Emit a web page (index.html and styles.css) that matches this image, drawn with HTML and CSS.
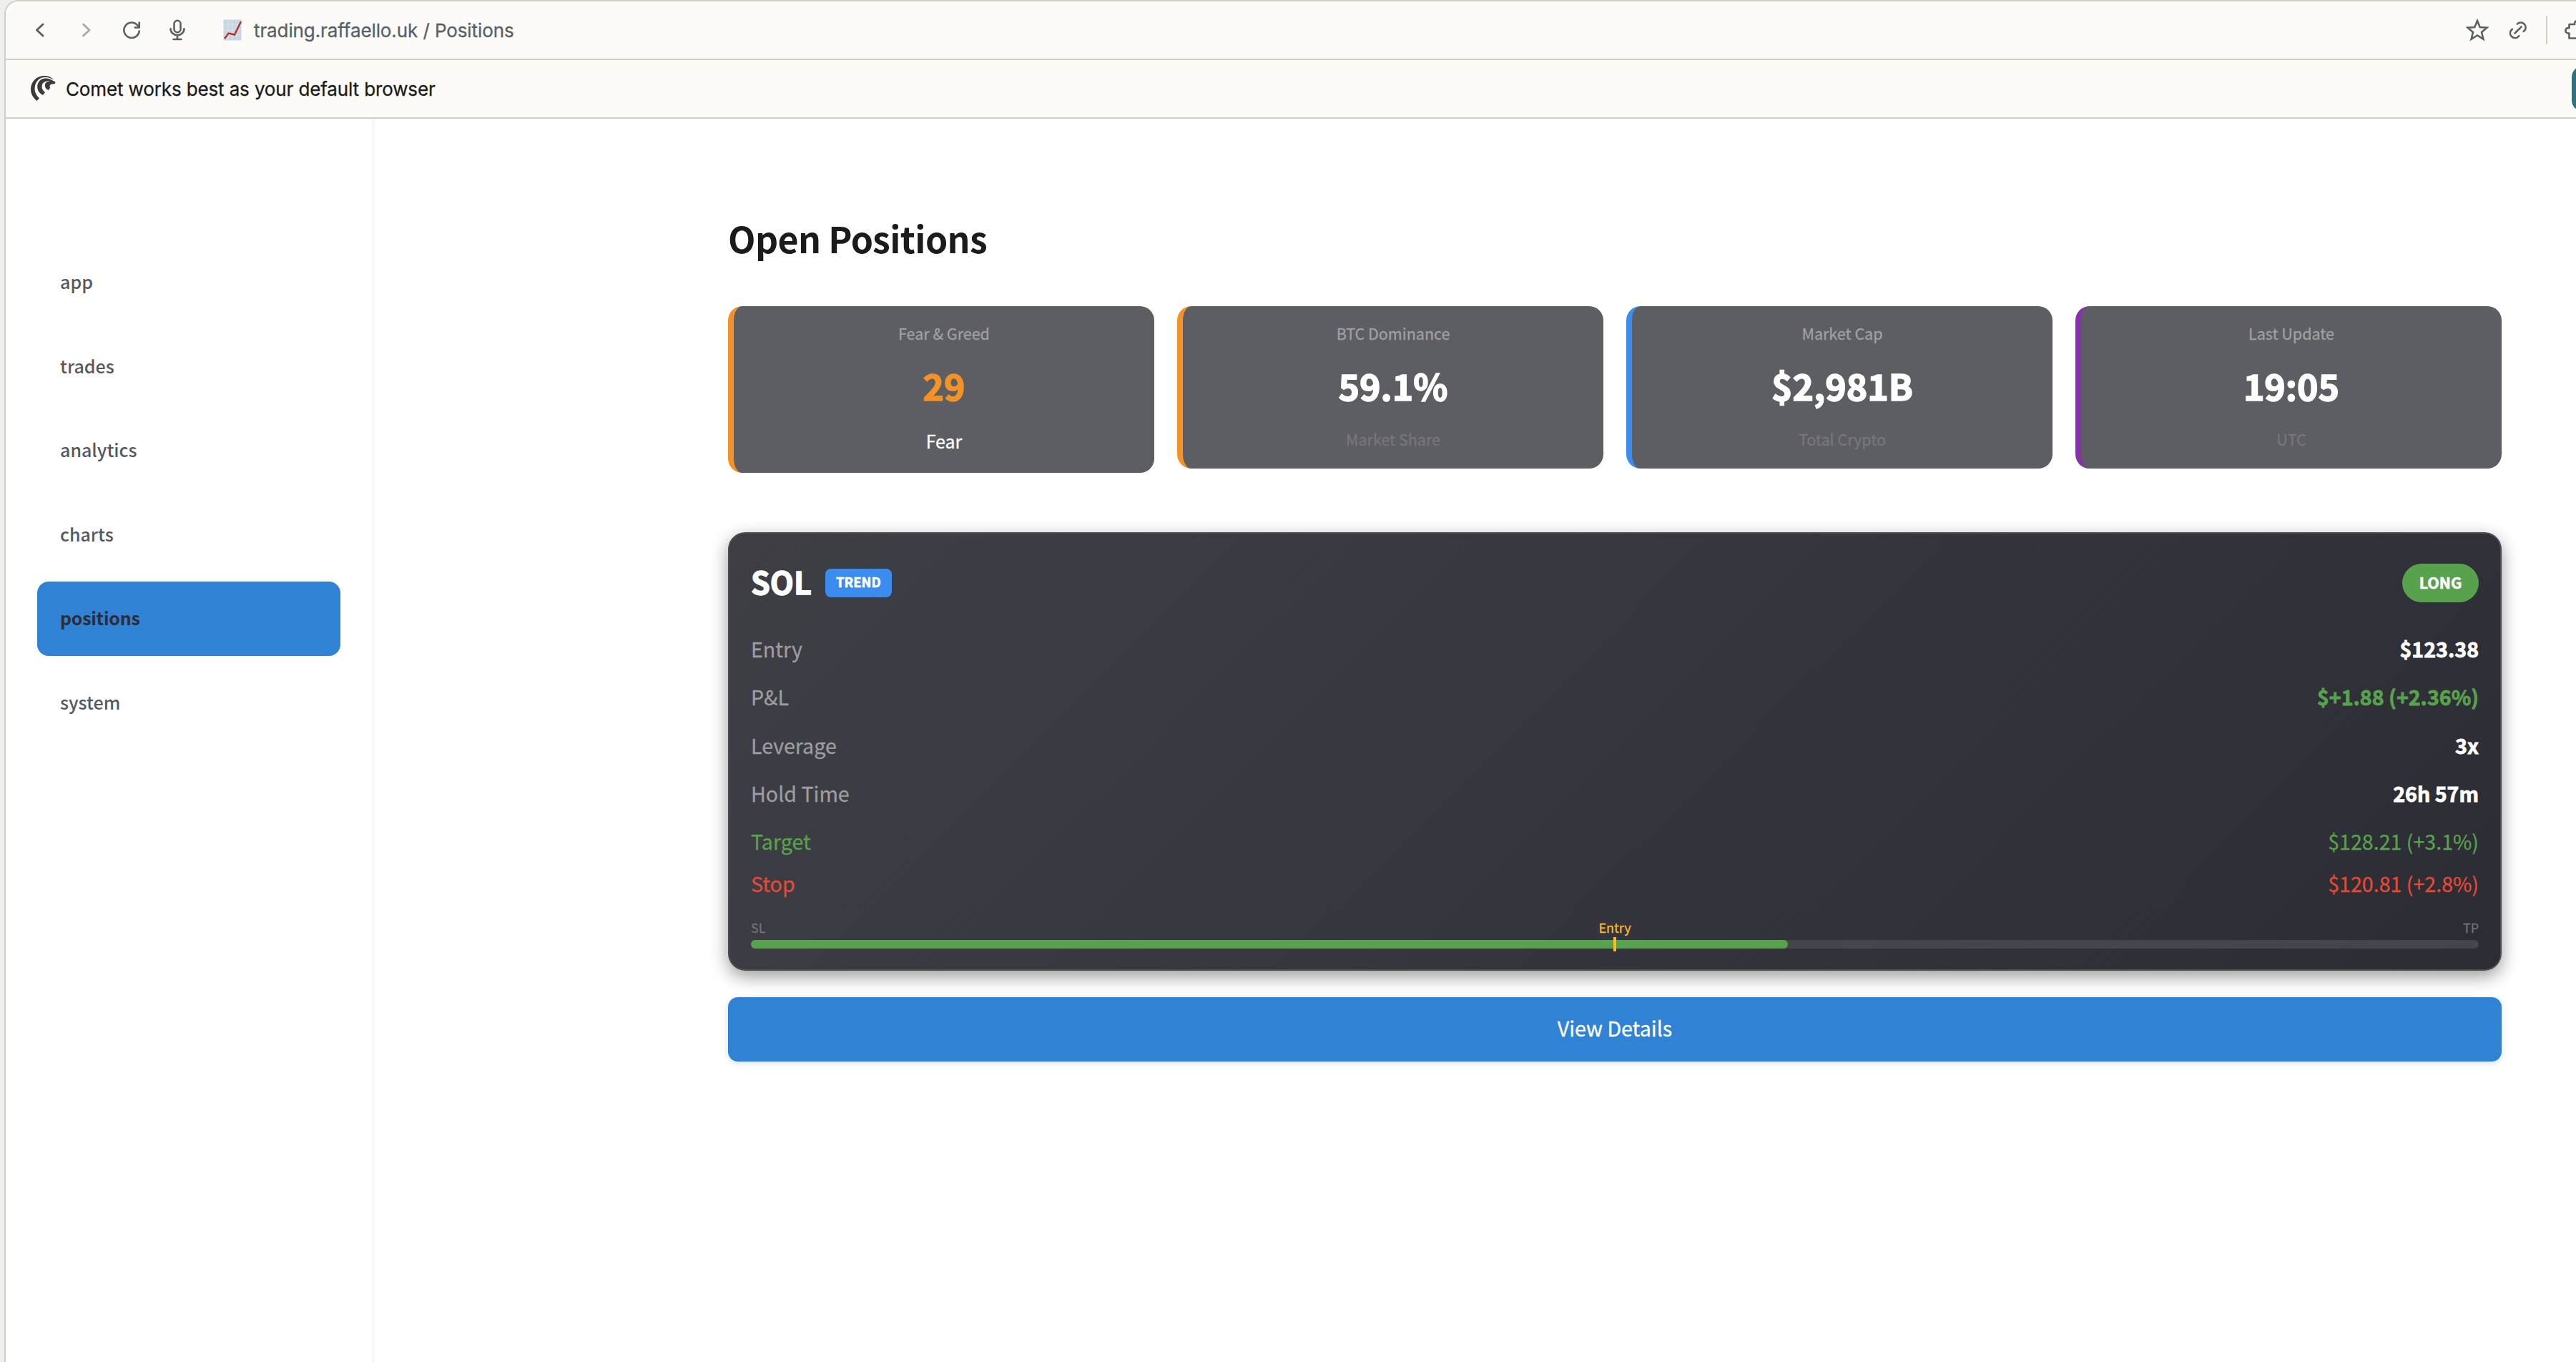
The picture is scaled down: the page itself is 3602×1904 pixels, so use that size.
FILE: index.html
```html
<!DOCTYPE html>
<html lang="en">
<head>
<meta charset="utf-8">
<title>Positions</title>
<link rel="stylesheet" href="styles.css">
</head>
<body>
<div class="window">
  <header class="toolbar">
    <svg class="icon back" viewBox="0 0 14 22"><path d="M12 3 3.500 11l8.500 8"/></svg>
    <svg class="icon forward" viewBox="0 0 14 22"><path d="m2.500 3 8.500 8-8.500 8"/></svg>
    <svg class="icon reload" viewBox="0 0 24 24"><path d="M22.700 13.500A10.700 10.700 0 1 1 20 5l2.600 3"/><path d="M22.700 1.500v7h-6"/></svg>
    <svg class="icon mic" viewBox="0 0 24 30"><rect x="7.500" y="1.800" width="9" height="16.400" rx="4.500"/><path d="M2.500 13.200a9.500 9 0 0 0 19 0M12 22.400V28M6.500 28h11"/></svg>
    <svg class="favicon" viewBox="0 0 26 30"><rect x="0.5" y="0.5" width="25" height="29" fill="#c9d6e1"/><path d="M7 1v28M13 1v28M19 1v28M1 8h24M1 15h24M1 22h24" stroke="#d9e3ec" stroke-width="1"/><path d="m2 27 5.500-7.500 8.500 2 9-18.500" fill="none" stroke="#b3322c" stroke-width="2.400"/></svg>
    <div class="url">trading.raffaello.uk / Positions</div>
    <div class="spacer"></div>
    <svg class="icon star" viewBox="0 0 32 32"><path d="m16 3 3.700 9 9.800.700-7.500 6.300 2.400 9.700L16 23.500l-8.400 5.200L10 19 2.500 12.700l9.800-.7z"/></svg>
    <svg class="icon link" viewBox="0 0 26 26"><path d="M8.500 17.500l9-9M12 4.700l1-1a6.800 6.800 0 0 1 9.400 9.500l-1.800 1.700M14.300 21.200l-1.500 1.500a6.800 6.800 0 0 1-9.500-9.500l1.600-1.500"/></svg>
    <div class="divider"></div>
    <svg class="icon puzzle" viewBox="0 0 16 28"><path d="M18 25.500H6.500v-7H5a3.700 3.700 0 0 1 0-7.400h1.500V6H14V4.500A4 4 0 0 1 18 1"/></svg>
  </header>
  <div class="notice">
    <svg class="comet" viewBox="0 0 35 36"><g fill="#3b3b3b"><path d="M33 6.500C29 2 25 0 19 0 8 0 0 8 0 19c0 7 4 12 8.500 16l3.500-3.700C7.500 27 5.300 22.500 5.600 17 6.200 8 12 2 20 2c5.500 0 9.500 1.500 13 4.500z"/><path d="M32 7.500C28 4.500 24 3.400 20 3.600 12 4 8.300 11 9.500 18c.700 4 3.500 7 7.500 9l3-4c-3.500-2.500-5-5.500-4.300-9.500C16.500 9 22 6 32 7.500z"/><path d="M33 7.500C26 6 20 8.500 19.800 13c0 3.700 2 6 5.200 7l2.300-3.800c-2-2 .2-5.200 3.200-4.700 4 .6 5-2.500 2.500-4z"/></g></svg>
    <div class="notice-text">Comet works best as your default browser</div>
    <div class="spacer"></div>
    <div class="notice-action"></div>
  </div>
  <div class="page">
    <nav class="sidebar">
      <a class="nav-item">app</a>
      <a class="nav-item">trades</a>
      <a class="nav-item">analytics</a>
      <a class="nav-item">charts</a>
      <a class="nav-item active">positions</a>
      <a class="nav-item">system</a>
    </nav>
    <main class="content">
      <h1 class="title">Open Positions</h1>
      <section class="metrics">
        <div class="metric orange"><div class="label">Fear &amp; Greed</div><div class="value fear">29</div><div class="sub strong">Fear</div></div>
        <div class="metric orange"><div class="label">BTC Dominance</div><div class="value">59.1%</div><div class="sub">Market Share</div></div>
        <div class="metric blue"><div class="label">Market Cap</div><div class="value">$2,981B</div><div class="sub">Total Crypto</div></div>
        <div class="metric purple"><div class="label">Last Update</div><div class="value">19:05</div><div class="sub">UTC</div></div>
      </section>
      <section class="position">
        <div class="position-head">
          <div class="symbol">SOL</div>
          <div class="strategy">TREND</div>
          <div class="spacer"></div>
          <div class="side">LONG</div>
        </div>
        <div class="rows">
          <div class="row"><span>Entry</span><b>$123.38</b></div>
          <div class="row"><span>P&amp;L</span><b class="gain">$+1.88 (+2.36%)</b></div>
          <div class="row"><span>Leverage</span><b>3x</b></div>
          <div class="row"><span>Hold Time</span><b>26h 57m</b></div>
          <div class="row target"><span>Target</span><span>$128.21 (+3.1%)</span></div>
          <div class="row stop"><span>Stop</span><span>$120.81 (+2.8%)</span></div>
        </div>
        <div class="scale"><span>SL</span><span class="entry">Entry</span><span class="end">TP</span></div>
        <div class="track"><div class="fill" style="width:60%"></div><div class="marker"></div></div>
      </section>
      <button class="details">View Details</button>
    </main>
  </div>
</div>
</body>
</html>
```
FILE: styles.css
```css
* { box-sizing: border-box; }
body { margin: 0; background: #efefef; font-family: "Noto Sans CJK SC", "Open Sans", sans-serif; color: #1b1b1b; }
.window { height: 1904px; margin-left: 6px; border: 2px solid #d0cfc4; border-right: 0; border-bottom: 0; border-top-left-radius: 20px; background: #fff; overflow: hidden; }
.spacer { flex: 1; }
.icon { flex: none; fill: none; stroke: #596166; stroke-width: 2.6; stroke-linecap: round; stroke-linejoin: round; }

.toolbar, .notice { display: flex; align-items: center; height: 82px; background: #fdfbf8; border-bottom: 2px solid #d0cfc4; font-family: Inter, sans-serif; font-size: 26px; white-space: nowrap; }
.toolbar { padding-left: 40px; }
.back, .forward { width: 14px; height: 22px; stroke-width: 3; }
.back { margin-right: 52px; }
.forward { stroke: #aaaba9; margin-right: 44px; }
.reload { width: 24px; height: 24px; margin-right: 40px; }
.mic { width: 24px; height: 30px; margin-right: 52px; }
.favicon { flex: none; width: 26px; height: 30px; margin-right: 17px; }
.url { color: #596166; letter-spacing: -0.1px; -webkit-text-stroke: 0.3px; }
.star { width: 32px; height: 32px; margin-right: 28px; stroke-linejoin: miter; }
.link { width: 26px; height: 26px; margin-right: 26px; }
.divider { width: 2px; height: 40px; background: #d0cfc4; margin-right: 24px; }
.puzzle { width: 16px; height: 28px; }

.notice { padding-left: 35px; overflow: hidden; }
.comet { flex: none; width: 35px; height: 36px; margin-right: 14px; }
.notice-text { color: #1b1b1b; letter-spacing: -0.130px; -webkit-text-stroke: 0.3px; }
.notice-action { flex: none; width: 80px; height: 64px; margin-right: -74px; border-radius: 16px; background: #32707e; }

.page { display: flex; height: 1738px; -webkit-text-stroke: 0.3px; }
.sidebar { display: flex; flex-direction: column; gap: 13.6px; width: 516px; padding: 177px 44px 0; border-right: 4px solid #f8f8f9; -webkit-text-stroke: 0; }
.nav-item { width: 424px; height: 104px; padding-left: 32px; border-radius: 16px; font-size: 25px; line-height: 100px; font-weight: 500; color: #565860; }
.nav-item.active { background: #3083d4; color: #2c2d37; font-weight: 700; letter-spacing: -0.250px; }

.content { width: 2974px; padding: 132px 0 0 494px; }
.title { margin: 0 0 62px; font-size: 50px; line-height: 68px; font-weight: 700; letter-spacing: -0.600px; -webkit-text-stroke: 0; }
.metrics { display: grid; grid-template-columns: repeat(4, 596px); gap: 32px; align-items: start; height: 233px; margin-bottom: 83px; }
.metric { padding: 19px 0 22px; border-left: 8px solid; border-radius: 20px; background: #5d5e64; text-align: center; }
.orange { border-color: #f39227; }
.blue { border-color: #3a8dee; }
.purple { border-color: #8632a8; }
.label { margin-bottom: 19px; font-size: 21.5px; line-height: 38px; color: #a0a0a0; }
.value { margin-bottom: 22px; font-size: 50px; line-height: 68px; font-weight: 700; color: #fff; -webkit-text-stroke: 1.6px; }
.value.fear { color: #f39227; }
.sub { font-size: 21.5px; line-height: 39px; color: #77777a; }
.sub.strong { font-size: 25px; line-height: 45px; color: #fff; }

.position { height: 613px; margin-bottom: 37px; padding: 42px 30px 29px; border: 2px solid #4c4c51; border-radius: 24px; background: linear-gradient(135deg, #3e3e44, #3b3b44 20%, #2c2c34); background-origin: border-box; box-shadow: 0 8px 24px rgba(0, 0, 0, 0.4); }
.position-head { display: flex; align-items: flex-start; height: 54px; margin-bottom: 40px; color: #fff; font-weight: 700; -webkit-text-stroke: 0.6px; }
.symbol { margin-right: 19px; font-size: 43px; line-height: 48px; -webkit-text-stroke: 1.4px; }
.strategy { width: 93px; height: 40px; margin-top: 7px; border-radius: 8px; background: #3a8dee; font-size: 18.500px; line-height: 37px; text-align: center; }
.side { width: 107px; height: 54px; border-radius: 27px; background: #58a14d; font-size: 21.500px; line-height: 51px; text-align: center; }
.rows { display: flex; flex-direction: column; gap: 17.300px; font-size: 28.600px; line-height: 50px; }
.row { display: flex; justify-content: space-between; color: #9d9d9f; }
.row b { font-weight: 700; color: #fff; -webkit-text-stroke: 0.8px; }
.row .gain, .row.target { color: #58a14d; }
.row.stop { margin-top: -8.300px; color: #e34b35; }
.scale { display: grid; grid-template-columns: 1fr auto 1fr; margin: 24.200px 0 5.800px; font-size: 17.900px; line-height: 24px; color: #727276; }
.entry { color: #fcba2c; }
.end { text-align: right; }
.track { position: relative; height: 12px; border-radius: 6px; background: #46464a; }
.fill { height: 12px; border-radius: 6px; background: #58a14d; }
.marker { position: absolute; left: 50%; top: -4px; width: 4px; height: 20px; margin-left: -2px; background: #fcba2c; }
.details { display: block; width: 2480px; height: 90px; padding: 0 0 5px; border: 0; border-radius: 14px; background: #3083d4; box-shadow: 0 2px 8px rgba(48, 131, 212, 0.25); color: #fff; font-family: inherit; font-size: 28.600px; font-weight: 400; -webkit-text-stroke: 0.3px; }
```
